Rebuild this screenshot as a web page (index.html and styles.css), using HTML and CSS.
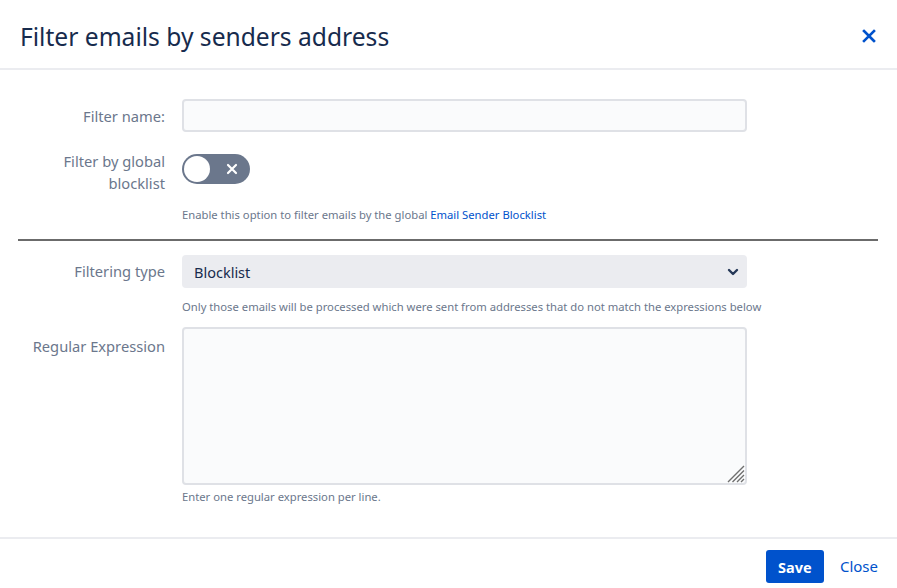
FILE: index.html
```html
<!DOCTYPE html>
<html lang="en">
<head>
<meta charset="utf-8">
<title>Filter emails by senders address</title>
<link rel="stylesheet" href="styles.css">
</head>
<body>
<div class="dialog">
  <header class="dialog-header">
    <h1 class="dialog-title">Filter emails by senders address</h1>
    <button class="icon-close" aria-label="Close">
      <svg width="14" height="14" viewBox="0 0 14 14"><path d="M2 2L12 12M12 2L2 12" stroke="#0052cc" stroke-width="2.6" stroke-linecap="square" fill="none"/></svg>
    </button>
  </header>
  <main class="dialog-body">
    <div class="row row-name">
      <label class="label label-name">Filter name:</label>
      <div class="field"><input class="text-input" type="text"></div>
    </div>
    <div class="row row-toggle">
      <label class="label label-toggle">Filter by global blocklist</label>
      <div class="field">
        <div class="toggle">
          <span class="knob"></span>
          <svg class="toggle-x" width="12" height="12" viewBox="0 0 12 12"><path d="M2 2L10 10M10 2L2 10" stroke="#fff" stroke-width="2.2" stroke-linecap="round" fill="none"/></svg>
        </div>
        <p class="help help-toggle">Enable this option to filter emails by the global <a href="#" class="link">Email Sender Blocklist</a></p>
      </div>
    </div>
    <hr class="divider">
    <div class="row row-type">
      <label class="label label-type">Filtering type</label>
      <div class="field">
        <div class="select">
          <span>Blocklist</span>
          <svg class="chevron" width="12" height="8" viewBox="0 0 12 8"><path d="M2 2L6 6L10 2" stroke="#253858" stroke-width="2.4" stroke-linecap="round" stroke-linejoin="round" fill="none"/></svg>
        </div>
        <p class="help help-type">Only those emails will be processed which were sent from addresses that do not match the expressions below</p>
      </div>
    </div>
    <div class="row row-regex">
      <label class="label label-regex">Regular Expression</label>
      <div class="field">
        <div class="textarea-wrap">
          <textarea class="textarea"></textarea>
          <svg class="grip" width="18" height="18" viewBox="0 0 18 18"><path d="M17 1L1 17M17 5.5L5.5 17M17 10L10 17M17 14L14 17" stroke="#6f6f6f" stroke-width="1.4" fill="none"/></svg>
        </div>
        <p class="help help-regex">Enter one regular expression per line.</p>
      </div>
    </div>
  </main>
  <footer class="dialog-footer">
    <button class="btn-save">Save</button>
    <a href="#" class="btn-close">Close</a>
  </footer>
</div>
</body>
</html>
```
FILE: styles.css
```css
* { box-sizing: border-box; }
html, body { margin: 0; padding: 0; background: #fff; }
body {
  font-family: "Noto Sans", "Open Sans", sans-serif;
  color: #172b4d;
  width: 897px;
  height: 588px;
  overflow: hidden;
}
.dialog { display: flex; flex-direction: column; height: 588px; }
.dialog-header {
  height: 70px;
  border-bottom: 2px solid #ebecf0;
  display: flex;
  align-items: center;
  justify-content: space-between;
  padding: 4px 20px 0 20px;
}
.dialog-title {
  margin: 0;
  font-size: 24.6px;
  font-weight: 400;
  color: #172b4d;
}
.icon-close {
  border: 0;
  background: none;
  padding: 0;
  width: 14px;
  height: 14px;
  margin-right: 1px;
  display: flex;
}
.dialog-body {
  flex: 1;
  padding: 29px 19px 0 18px;
}
.row {
  display: grid;
  grid-template-columns: 147px 565px;
  column-gap: 17px;
}
.label {
  text-align: right;
  font-size: 14.7px;
  line-height: 20px;
  color: #6b778c;
}
.label-name { padding-top: 7px; }
.row-name { margin-bottom: 18px; }
.text-input {
  width: 565px;
  height: 33px;
  border: 2px solid #dfe1e6;
  border-radius: 4px;
  background: #fafbfc;
  display: block;
  margin: 0;
}
.label-toggle { line-height: 22px; }
.toggle {
  margin-top: 4px;
  width: 68px;
  height: 30px;
  border-radius: 15px;
  background: #6b778c;
  display: flex;
  align-items: center;
  justify-content: space-between;
  padding: 0 12px 0 2px;
}
.knob {
  width: 26px;
  height: 26px;
  border-radius: 50%;
  background: #fff;
}
.toggle-x { display: block; }
.help {
  margin: 0;
  font-size: 11.25px;
  line-height: 16px;
  color: #6b778c;
  white-space: nowrap;
}
.help-toggle { margin-top: 23px; }
.link { color: #0052cc; text-decoration: none; }
.divider {
  border: 0;
  height: 2px;
  background: #6b6b6b;
  margin: 16px 0 14px 0;
}
.label-type { padding-top: 6px; }
.select {
  height: 33px;
  border-radius: 4px;
  background: #ebecf0;
  display: flex;
  align-items: center;
  justify-content: space-between;
  padding: 0 8px 0 12px;
  font-size: 14.5px;
  color: #172b4d;
}
.chevron { display: block; }
.help-type { margin-top: 11px; }
.row-type { margin-bottom: 12px; }
.label-regex { padding-top: 9px; }
.textarea-wrap { position: relative; width: 565px; }
.textarea {
  display: block;
  width: 565px;
  height: 158px;
  border: 2px solid #dfe1e6;
  border-radius: 4px;
  background: #fafbfc;
  resize: none;
  margin: 0;
}
.grip {
  position: absolute;
  right: 2px;
  bottom: 2px;
  pointer-events: none;
}
.help-regex { margin-top: 4px; }
.dialog-footer {
  height: 51px;
  border-top: 2px solid #ebecf0;
  display: flex;
  align-items: flex-start;
  justify-content: flex-end;
  padding: 11px 19px 0 0;
  gap: 16px;
}
.btn-save {
  width: 58px;
  height: 33px;
  border: 0;
  border-radius: 3px;
  background: #0052cc;
  color: #fff;
  font-family: "Noto Sans", "Open Sans", sans-serif;
  font-size: 14.5px;
  font-weight: 700;
  padding: 0;
}
.btn-close {
  color: #0052cc;
  text-decoration: none;
  font-size: 15px;
  line-height: 33px;
}
```
